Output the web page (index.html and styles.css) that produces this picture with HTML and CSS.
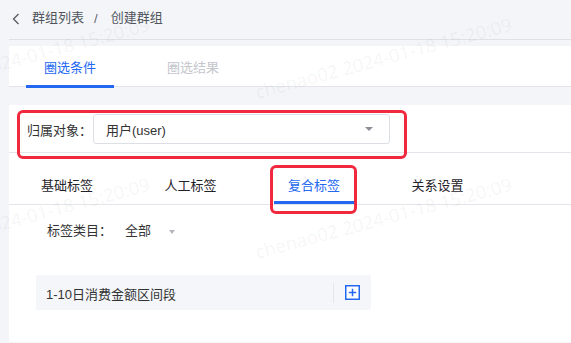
FILE: index.html
```html
<!DOCTYPE html>
<html lang="zh">
<head>
<meta charset="utf-8">
<title>创建群组</title>
<link rel="stylesheet" href="styles.css">
</head>
<body>
<div class="page">
  <div class="header">
    <svg class="back" width="8" height="12" viewBox="0 0 8 12"><path d="M6.5 1 L1.5 6 L6.5 11" fill="none" stroke="#555a63" stroke-width="1.3"/></svg>
    <span class="crumb">群组列表</span>
    <span class="sep">/</span>
    <span class="crumb">创建群组</span>
  </div>
  <div class="top-tabs">
    <div class="top-tab active">圈选条件</div>
    <div class="top-tab muted">圈选结果</div>
  </div>
  <div class="panel">
    <div class="owner-row">
      <span class="label">归属对象：</span>
      <div class="select">
        <span class="select-text">用户(user)</span>
        <span class="arrow"></span>
      </div>
    </div>
    <div class="tag-tabs">
      <div class="tag-tab">基础标签</div>
      <div class="tag-tab">人工标签</div>
      <div class="tag-tab active">复合标签</div>
      <div class="tag-tab">关系设置</div>
    </div>
    <div class="cat-row">
      <span class="label">标签类目：</span>
      <span class="cat-value">全部</span>
      <span class="caret"></span>
    </div>
    <div class="card">
      <span class="card-text">1-10日消费金额区间段</span>
      <span class="divider"></span>
      <svg class="plus" width="15" height="15" viewBox="0 0 15 15"><rect x="0.75" y="0.75" width="13.5" height="13.5" fill="#fff" stroke="#2468f2" stroke-width="1.5"/><path d="M7.5 3.8 V11.2 M3.8 7.5 H11.2" stroke="#2468f2" stroke-width="1.5"/></svg>
    </div>
  </div>
</div>
<div class="mark mark-owner"></div>
<div class="mark mark-tab"></div>
<div class="wm wm1">chenao02 2024-01-18 15:20:09</div>
<div class="wm wm2">chenao02 2024-01-18 15:20:09</div>
<div class="wm wm3">chenao02 2024-01-18 15:20:09</div>
<div class="wm wm4">chenao02 2024-01-18 15:20:09</div>
</body>
</html>
```
FILE: styles.css
```css
html, body {
  margin: 0;
  padding: 0;
}
body {
  background: #f4f5f8;
  font-family: "Liberation Sans", "Noto Sans CJK SC", sans-serif;
  font-size: 13px;
  color: #333;
  width: 571px;
  height: 343px;
  overflow: hidden;
  position: relative;
}
.page {
  padding-left: 9px;
}
.header {
  height: 40px;
  border-bottom: 1px solid #dfe1e6;
  display: flex;
  align-items: center;
  padding-left: 3px;
  color: #50555e;
  font-size: 13px;
  box-sizing: border-box;
}
.back {
  margin-right: 12px;
  margin-top: -2px;
}
.crumb {
  line-height: 20px;
  margin-top: -3px;
}
.sep {
  margin: -3px 13px 0 10px;
  color: #60656e;
}
.top-tabs {
  margin-top: 6px;
  height: 40px;
  background: #fff;
  border-bottom: 1px solid #e3e5ea;
  display: flex;
  padding-left: 17px;
  gap: 35px;
}
.top-tab {
  width: 88px;
  text-align: center;
  line-height: 20px;
  padding-top: 12px;
  position: relative;
  box-sizing: border-box;
}
.top-tab.active {
  color: #2468f2;
}
.top-tab.active::after {
  content: "";
  position: absolute;
  left: 0;
  right: 0;
  bottom: -2px;
  height: 3px;
  background: #2468f2;
}
.top-tab.muted {
  color: #c3c6cc;
}
.panel {
  margin-top: 18px;
  background: #fff;
  height: 237px;
}
.owner-row {
  display: flex;
  align-items: center;
  padding: 9px 0 8px 18px;
  border-bottom: 1px solid #e3e5ea;
}
.label {
  color: #333;
  width: 66px;
}
.select {
  width: 297px;
  height: 30px;
  box-sizing: border-box;
  border: 1px solid #dcdfe5;
  border-radius: 3px;
  display: flex;
  align-items: center;
  padding-left: 12px;
  padding-right: 16px;
}
.select-text {
  flex: 1;
  color: #333;
}
.arrow {
  width: 0;
  height: 0;
  border-left: 4px solid transparent;
  border-right: 4px solid transparent;
  border-top: 4px solid #8a8e96;
}
.tag-tabs {
  display: flex;
  gap: 43.5px;
  padding-left: 18px;
  border-bottom: 1px solid #e3e5ea;
}
.tag-tab {
  width: 80px;
  text-align: center;
  padding-top: 23px;
  line-height: 20px;
  height: 51px;
  box-sizing: border-box;
  color: #1f2329;
  position: relative;
}
.tag-tab.active {
  color: #2468f2;
}
.tag-tab.active::after {
  content: "";
  position: absolute;
  left: 0;
  right: 0;
  bottom: 0;
  height: 3px;
  background: #2468f2;
}
.cat-row {
  display: flex;
  align-items: center;
  margin-top: 16px;
  padding-left: 38px;
  line-height: 20px;
}
.cat-row .label {
  width: 78px;
}
.cat-value {
  color: #333;
}
.caret {
  margin-left: 18px;
  width: 0;
  height: 0;
  border-left: 3.5px solid transparent;
  border-right: 3.5px solid transparent;
  border-top: 4px solid #b3b6bc;
  margin-top: 2px;
}
.card {
  margin: 34px 0 0 27px;
  width: 335px;
  height: 35px;
  background: #f4f6fa;
  border-radius: 2px;
  display: flex;
  align-items: center;
  padding: 0 11px 0 10px;
  box-sizing: border-box;
}
.card-text {
  flex: 1;
  color: #333;
  margin-top: 1px;
}
.divider {
  width: 1px;
  height: 20px;
  background: #e3e5ea;
  margin-right: 11px;
}
.plus {
  display: block;
}
.mark {
  position: absolute;
  border: 3px solid #f0293e;
  border-radius: 6px;
  box-sizing: border-box;
  pointer-events: none;
}
.mark-owner {
  left: 17px;
  top: 110px;
  width: 390px;
  height: 49px;
}
.mark-tab {
  left: 270px;
  top: 165px;
  width: 87px;
  height: 49px;
}
.wm {
  position: absolute;
  font-family: "Noto Sans", sans-serif;
  font-size: 18.5px;
  line-height: 18px;
  color: rgba(0, 0, 0, 0.055);
  white-space: nowrap;
  transform-origin: 0 14px;
  transform: rotate(-15deg);
  pointer-events: none;
}
.wm1 { left: -105px; top: 83px; }
.wm2 { left: 257px; top: 83px; }
.wm3 { left: -105px; top: 243px; }
.wm4 { left: 257px; top: 243px; }
```
